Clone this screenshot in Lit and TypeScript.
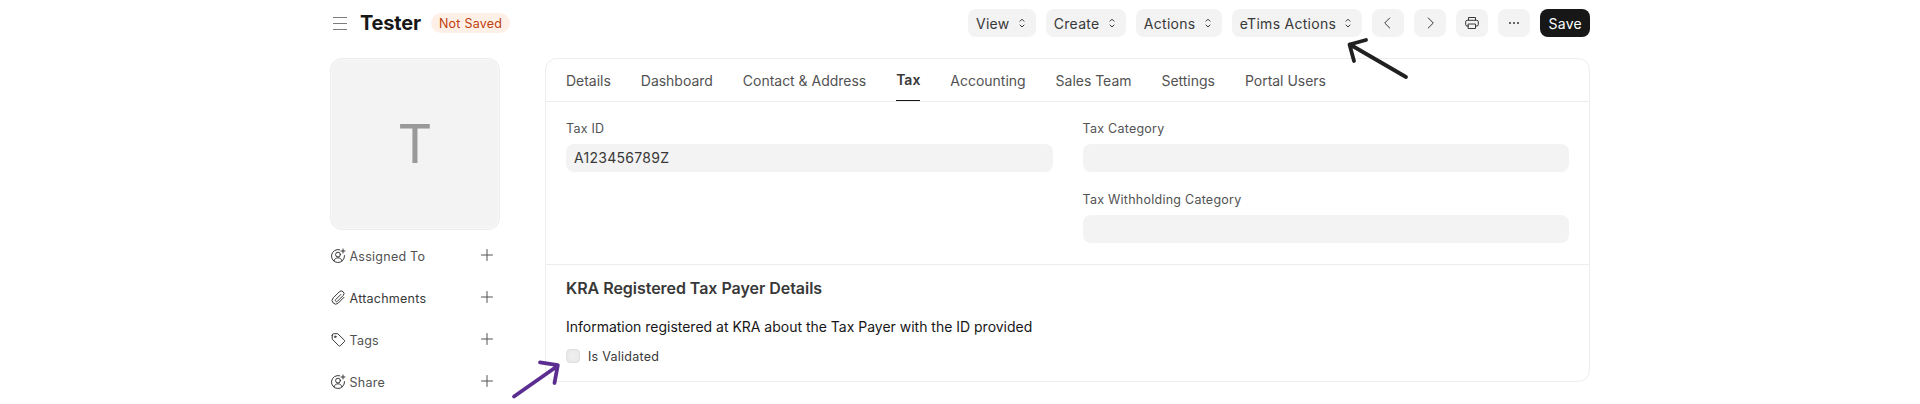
import { LitElement, html, css, svg } from "lit";
import { customElement } from "lit/decorators.js";

const userIcon = svg`<path d="M9.6 1.700A6.500 6.500 0 1 0 14.500 7.600"/><circle cx="8" cy="6.6" r="2.4"/><path d="M4 12.9c.5-2 2-3.100 4-3.100s3.500 1.100 4 3.100M13 1v4M11 3h4"/>`;
const clipIcon = svg`<path d="M14 7.300l-5.700 5.700a3.600 3.600 0 0 1-5.100-5.100l6-6a2.500 2.500 0 0 1 4.100 3.500l-5.900 5.900a1.200 1.200 0 0 1-1.700-1.700l5.200-5.200"/>`;
const tagIcon = svg`<path d="M2.200 3.300v3.800l6.600 6.700a1 1 0 0 0 1.400 0l4.200-4.200a1 1 0 0 0 0-1.400L7.700 1.700H3.800a1.600 1.600 0 0 0-1.600 1.600z"/><circle cx="5.200" cy="4.800" r=".8"/>`;

const sideItems = [
  { label: "Assigned To", icon: userIcon, dark: false },
  { label: "Attachments", icon: clipIcon, dark: true },
  { label: "Tags", icon: tagIcon, dark: false },
  { label: "Share", icon: userIcon, dark: false },
];
const menus = ["View", "Create", "Actions", "eTims Actions"];
const tabs = ["Details", "Dashboard", "Contact & Address", "Tax", "Accounting", "Sales Team", "Settings", "Portal Users"];

@customElement("app-root")
export class AppRoot extends LitElement {
  static styles = css`
    :host { display: block; position: relative; height: 404px; overflow: hidden; background: #fff;
      font-family: Inter, "Liberation Sans", sans-serif; font-size: 14px; color: #383838; }
    * { box-sizing: border-box; }
    svg { display: block; fill: none; stroke: currentColor; stroke-linecap: round; stroke-linejoin: round; }
    .page { width: 1260px; margin: 0 auto; }
    .head { display: flex; align-items: center; height: 58px; padding-bottom: 12px; }
    .burger { display: grid; gap: 5px; width: 14px; margin: 0 13px 0 3px; }
    .burger i { height: 1px; background: #7c7c7c; }
    .title { font-size: 20px; font-weight: 700; letter-spacing: -0.01em; color: #171717; margin: 0; line-height: 24px; }
    .badge { margin: 0 0 0 10px; height: 20px; line-height: 20px; border-radius: 10px; padding: 1px 8px 0; background: #fff0e7; color: #bd3e0c; }
    .badge, .item, .label, .check { font-size: 12.5px; letter-spacing: 0.25px; }
    .actions { display: flex; gap: 10px; margin-left: auto; letter-spacing: 0.02em; }
    .btn { height: 28px; border-radius: 8px; background: #f3f3f3; display: flex; align-items: center; padding: 2px 8px 0; line-height: 26px; }
    .btn svg { margin: -2px 0 0 6.300px; }
    .btn.sq { width: 32px; padding: 0; justify-content: center; }
    .btn.sq svg { margin: 0; }
    .btn.save { background: #171717; color: #fff; }
    .body { display: flex; justify-content: space-between; }
    .side { width: 170px; }
    .avatar { height: 172px; border: 1px solid #ededed; border-radius: 12px; background: #f3f3f3; display: flex; align-items: center; justify-content: center; font-size: 54px; line-height: 60px; color: #999; box-shadow: inset 0 0 0 1px #f8f8f8; }
    .items { padding-top: 4px; }
    .item { display: flex; align-items: center; height: 42px; color: #525252; }
    .item span { flex: 1; padding: 3px 0 0 3.500px; }
    .item .ic { color: #383838; margin-top: 2px; }
    .item .plus { margin-right: 7px; color: #525252; }
    .item .dark { color: #383838; }
    .card { width: 1045px; height: 324px; border: 1px solid #ededed; border-radius: 12px; }
    .tabs { display: flex; gap: 30px; height: 43px; padding: 0 20px; border-bottom: 1px solid #ededed; color: #525252; letter-spacing: -0.02px; }
    .tab { height: 43px; line-height: 43px; white-space: nowrap; }
    .tab.on { font-weight: 600; color: #383838; border-bottom: 1px solid #171717; height: 42px; line-height: 42px; }
    .fields { display: grid; grid-template-columns: 1fr 1fr; column-gap: 30px; height: 163px; padding: 17px 20px 0; border-bottom: 1px solid #ededed; }
    .field { height: 71px; }
    .label { line-height: 20px; color: #525252; margin-bottom: 5px; }
    .input { height: 28px; line-height: 28px; border-radius: 8px; background: #f3f3f3; padding: 0 8px; letter-spacing: 0.02em; }
    .kra { padding: 12px 20px 0; }
    .kra h2 { font-size: 16px; font-weight: 600; line-height: 22px; margin: 0; letter-spacing: -0.04px; }
    .info { color: #171717; line-height: 20px; margin: 18px 0 11px; letter-spacing: -0.01px; }
    .check { display: flex; align-items: center; gap: 8px; height: 16px; }
    .box { width: 14px; height: 14px; border-radius: 4px; border: 1px solid #dfdfdf; background: radial-gradient(#f1f1f1, #e6e6e6); }
    .marks { position: absolute; left: 0; top: 0; }
  `;

  render() {
    return html`
      <div class="page">
        <header class="head">
          <div class="burger"><i></i><i></i><i></i></div>
          <h1 class="title">Tester</h1>
          <span class="badge">Not Saved</span>
          <div class="actions">
            ${menus.map((m) => html`<div class="btn">${m}
              <svg width="12" height="12" viewBox="0 0 12 12" stroke-width="1"><path d="M4 4.200L6 2.200l2 2M4 8l2 2 2-2"/></svg></div>`)}
            <div class="btn sq"><svg width="16" height="16" viewBox="0 0 16 16"><path d="M9.700 3l-5 5 5 5"/></svg></div>
            <div class="btn sq"><svg width="16" height="16" viewBox="0 0 16 16"><path d="M6.300 3l5 5-5 5"/></svg></div>
            <div class="btn sq"><svg width="16" height="16" viewBox="0 0 16 16"><path d="M4.500 5V2.500h7V5M4.500 11H3a1.300 1.300 0 0 1-1.300-1.300V6.800A1.500 1.500 0 0 1 3.200 5.300h9.600a1.500 1.500 0 0 1 1.500 1.500v2.900A1.300 1.300 0 0 1 13 11h-1.500M4.500 9h7v4.500h-7z"/></svg></div>
            <div class="btn sq"><svg width="16" height="16" viewBox="0 0 16 16"><g stroke="none" fill="#383838"><circle cx="4" cy="8" r="1"/><circle cx="8" cy="8" r="1"/><circle cx="12" cy="8" r="1"/></g></svg></div>
            <div class="btn save">Save</div>
          </div>
        </header>
        <div class="body">
          <aside class="side">
            <div class="avatar">T</div>
            <div class="items">
              ${sideItems.map((s) => html`<div class="item">
                <svg class="ic" width="16" height="16" viewBox="0 0 16 16">${s.icon}</svg>
                <span class=${s.dark ? "dark" : ""}>${s.label}</span>
                <svg class="plus" width="12" height="12" viewBox="0 0 12 12"><path d="M6 .5v11M.5 6h11"/></svg>
              </div>`)}
            </div>
          </aside>
          <main class="card">
            <nav class="tabs">${tabs.map((t) => html`<div class="tab ${t === "Tax" ? "on" : ""}">${t}</div>`)}</nav>
            <section class="fields">
              <div class="field"><div class="label">Tax ID</div><div class="input">A123456789Z</div></div>
              <div>
                <div class="field"><div class="label">Tax Category</div><div class="input"></div></div>
                <div class="field"><div class="label">Tax Withholding Category</div><div class="input"></div></div>
              </div>
            </section>
            <section class="kra">
              <h2>KRA Registered Tax Payer Details</h2>
              <p class="info">Information registered at KRA about the Tax Payer with the ID provided</p>
              <div class="check"><div class="box"></div>Is Validated</div>
            </section>
          </main>
        </div>
      </div>
      <svg class="marks" width="1920" height="404" viewBox="0 0 1920 404" stroke-width="3.800">
        <path stroke="#202020" d="M1406 77L1350 44.500M1366 40l-16.500 4.500 4.500 16.500"/>
        <path stroke="#5b2d90" d="M514 396.500L557.500 366M540 362.300l17.800 2.900-3.300 17.800"/>
      </svg>`;
  }
}
